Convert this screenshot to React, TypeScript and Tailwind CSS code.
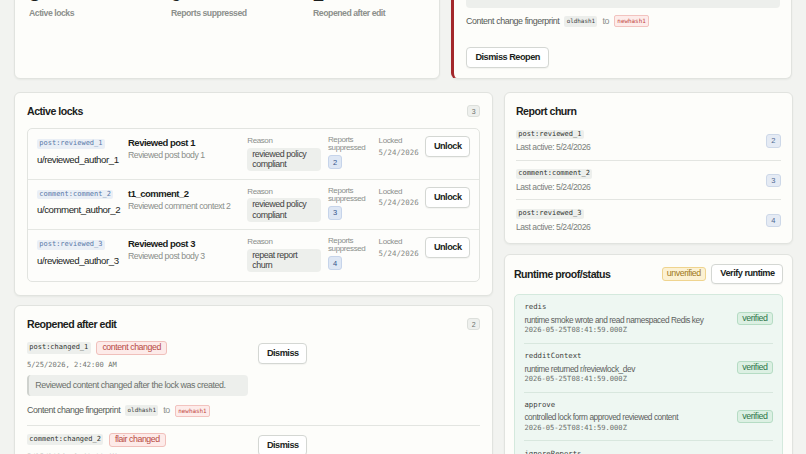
import type { ReactNode } from 'react'

const mono = "font-['DejaVu_Sans_Mono',monospace]"

const stats = [
  { value: '3', label: 'Active locks' },
  { value: '9', label: 'Reports suppressed' },
  { value: '2', label: 'Reopened after edit' },
]

const locks = [
  { id: 'post:reviewed_1', author: 'u/reviewed_author_1', title: 'Reviewed post 1', body: 'Reviewed post body 1', reason: 'reviewed policy compliant', count: 2 },
  { id: 'comment:comment_2', author: 'u/comment_author_2', title: 't1_comment_2', body: 'Reviewed comment context 2', reason: 'reviewed policy compliant', count: 3 },
  { id: 'post:reviewed_3', author: 'u/reviewed_author_3', title: 'Reviewed post 3', body: 'Reviewed post body 3', reason: 'repeat report churn', count: 4 },
]

const reopened = [
  { id: 'post:changed_1', reason: 'content changed', at: '5/25/2026, 2:42:00 AM', message: 'Reviewed content changed after the lock was created.' },
  { id: 'comment:changed_2', reason: 'flair changed', at: '5/25/2026, 2:40:00 AM', message: 'Post flair changed after the lock was created.' },
]

const checks = [
  { name: 'redis', detail: 'runtime smoke wrote and read namespaced Redis key' },
  { name: 'redditContext', detail: 'runtime returned r/reviewlock_dev' },
  { name: 'approve', detail: 'controlled lock form approved reviewed content' },
  { name: 'ignoreReports', detail: 'controlled lock form ignored reports on content' },
]

function Panel({ className = '', children }: { className?: string; children: ReactNode }) {
  return (
    <section className={`rounded-[6px] border border-[#e1e3df] bg-[#fdfdfa] shadow-[0_1px_2px_rgba(20,30,20,0.05)] ${className}`}>
      {children}
    </section>
  )
}

function Button({ className = '', children }: { className?: string; children: ReactNode }) {
  return (
    <button
      type="button"
      className={`shrink-0 whitespace-nowrap rounded-[4px] border border-[#d4d7d3] bg-white pl-[8.3px] pr-[7.8px] text-[9.2px] font-bold leading-none tracking-[-0.5px] text-[#1c1f1d] shadow-[0_1px_1px_rgba(0,0,0,0.04)] ${className}`}
    >
      {children}
    </button>
  )
}

function Count({ n }: { n: number }) {
  return (
    <span className="flex h-[12px] min-w-[12.6px] items-center justify-center rounded-[3px] border border-[#dcdfdb] bg-[#eef0ed] px-[3px] text-[7px] leading-none text-[#6d716d]">
      {n}
    </span>
  )
}

function PanelHeader({ title, right }: { title: string; right?: ReactNode }) {
  return (
    <div className="flex h-[14px] items-center justify-between">
      <h2 className="whitespace-nowrap text-[10.6px] font-bold leading-[14px] tracking-[-0.5px] text-[#1b1e1c]">{title}</h2>
      {right}
    </div>
  )
}

function Fingerprint() {
  return (
    <div className="flex h-[11px] items-center gap-[5px] whitespace-nowrap text-[8.9px] tracking-[-0.44px] text-[#575b57]">
      <span>Content change fingerprint</span>
      <code className={`${mono} rounded-[2px] bg-[#eceeeb] px-[2.4px] text-[5.9px] leading-[10.6px] tracking-normal text-[#3b3f3b]`}>oldhash1</code>
      <span className="text-[#8a8e8a]">to</span>
      <code className={`${mono} rounded-[2px] border border-[#f2c3bf] bg-[#fdecea] px-[2.4px] text-[5.9px] leading-[10px] tracking-normal text-[#c2443c]`}>newhash1</code>
    </div>
  )
}

function Label({ children }: { children: ReactNode }) {
  return <div className="text-[8px] font-medium leading-[9px] tracking-[-0.4px] text-[#8b8f8b]">{children}</div>
}

export default function App() {
  return (
    <div className="h-screen overflow-hidden bg-[#f2f3f0] px-[14px] font-['Liberation_Sans',Arial,sans-serif] text-[#1b1e1c]">
      <div className="-mt-[31px] grid h-[110px] grid-cols-[5fr_4fr] gap-[11px]">
        <Panel className="px-[14px] pt-[11px]">
          <div className="grid grid-cols-3 gap-[30px]">
            {stats.map((s) => (
              <div key={s.label}>
                <div className="text-[20px] font-bold leading-[26px] text-[#1b1e1c]">{s.value}</div>
                <div className="mt-[0.7px] whitespace-nowrap text-[8.7px] font-bold leading-[10px] tracking-[-0.47px] text-[#8c908c]">{s.label}</div>
              </div>
            ))}
          </div>
        </Panel>

        <Panel className="flex flex-col justify-end overflow-hidden border-l-[3px] border-l-[#a3282b] pb-[10.3px] pl-[12px] pr-[11px]">
          <div className="flex items-center gap-[5px]">
            <code className={`${mono} rounded-[2px] bg-[#edefec] px-[2.3px] text-[7px] leading-[11.3px] text-[#2f332f]`}>post:changed_1</code>
            <span className="rounded-[3px] border border-[#f0c0bb] bg-[#fdebe9] px-[5.5px] text-[8.8px] leading-[12.4px] tracking-[-0.44px] text-[#b84a43]">content changed</span>
          </div>
          <div className="mt-[5px] h-[44px] shrink-0 rounded-[4px] bg-[#edefec] px-[8px] pt-[4px] text-[8.9px] leading-[11px] tracking-[-0.44px] text-[#6b6f6b]">
            Reviewed content changed after the lock was created.
          </div>
          <div className="mt-[7.7px]">
            <Fingerprint />
          </div>
          <div className="mt-[20px] flex">
            <Button className="h-[21px]">Dismiss Reopen</Button>
          </div>
        </Panel>
      </div>

      <div className="mt-[13px] grid grid-cols-[1fr_289px] items-start gap-[11px]">
        <div className="flex flex-col gap-[9.7px]">
          <Panel className="px-[12px] pb-[13px] pt-[11px]">
            <PanelHeader title="Active locks" right={<Count n={3} />} />
            <div className="mt-[10px] divide-y divide-[#e5e7e3] rounded-[5px] border border-[#e2e4e0] bg-[#fdfdfb]">
              {locks.map((l) => (
                <div key={l.id} className="flex h-[50.5px] items-start pl-[9px] pr-[8.6px] pt-[7px]">
                  <div className="w-[91px] shrink-0 pt-[3px]">
                    <code className={`${mono} block w-fit rounded-[2px] bg-[#eaeff6] px-[2.3px] text-[7px] leading-[9.6px] text-[#5878a8]`}>{l.id}</code>
                    <div className="mt-[5.4px] whitespace-nowrap text-[9.7px] leading-[12px] tracking-[-0.47px] text-[#222523]">{l.author}</div>
                  </div>
                  <div className="w-[119.3px] shrink-0 pt-[1.3px]">
                    <div className="whitespace-nowrap text-[9.5px] font-bold leading-[12px] tracking-[-0.5px] text-[#1b1e1c]">{l.title}</div>
                    <div className="mt-[1px] whitespace-nowrap text-[8.7px] leading-[11px] tracking-[-0.44px] text-[#8a8e8a]">{l.body}</div>
                  </div>
                  <div className="w-[80.7px] shrink-0">
                    <Label>Reason</Label>
                    <div className="mt-[2.7px] w-[74px] rounded-[4px] bg-[#edefec] px-[5px] py-[1px] text-[8.9px] leading-[10.7px] tracking-[-0.44px] text-[#3f423f]">{l.reason}</div>
                  </div>
                  <div className="w-[50.6px] shrink-0">
                    <div className="text-[8px] font-medium leading-[8.3px] tracking-[-0.4px] text-[#8b8f8b]">Reports suppressed</div>
                    <span className="mt-[2.7px] flex h-[14px] w-[14px] items-center justify-center rounded-[3px] border border-[#c6d4ea] bg-[#dee7f4] text-[7.5px] text-[#34548a]">{l.count}</span>
                  </div>
                  <div className="w-[46px] shrink-0">
                    <Label>Locked</Label>
                    <div className={`${mono} mt-[2.7px] text-[7.4px] leading-[10px] text-[#858985]`}>5/24/2026</div>
                  </div>
                  <Button className="h-[21.3px]">Unlock</Button>
                </div>
              ))}
            </div>
          </Panel>

          <Panel className="px-[12px] pt-[11px]">
            <PanelHeader title="Reopened after edit" right={<Count n={2} />} />
            <div className="mt-[9.6px]">
              {reopened.map((r) => (
                <div key={r.id} className="flex items-start gap-[9.6px] border-b border-[#e3e5e1] pb-[8.4px] pt-[7px] first:pt-0">
                  <div className="w-[221px] shrink-0">
                    <div className="flex h-[14.4px] items-center gap-[5.3px]">
                      <code className={`${mono} rounded-[2px] bg-[#edefec] px-[2.3px] text-[7px] leading-[11.3px] text-[#2f332f]`}>{r.id}</code>
                      <span className="flex h-[14.4px] items-center rounded-[3px] border border-[#f0c0bb] bg-[#fdebe9] px-[5.5px] text-[8.8px] tracking-[-0.44px] text-[#b84a43]">{r.reason}</span>
                    </div>
                    <div className={`${mono} mt-[4.6px] text-[7.1px] leading-[10px] text-[#737773]`}>{r.at}</div>
                    <div className="mt-[5.4px] flex h-[20.6px] items-center rounded-[4px] border-l-2 border-[#cfd2ce] bg-[#edefec] pl-[6.3px] text-[8.9px] tracking-[-0.44px] text-[#6b6f6b]">{r.message}</div>
                    <div className="mt-[9.4px]">
                      <Fingerprint />
                    </div>
                  </div>
                  <Button className="mt-[2px] h-[21.4px]">Dismiss</Button>
                </div>
              ))}
            </div>
          </Panel>
        </div>

        <div className="flex flex-col gap-[10px]">
          <Panel className="px-[11px] pb-[11px] pt-[11px]">
            <PanelHeader title="Report churn" />
            <ul className="mt-[11.7px]">
              {locks.map((l) => (
                <li key={l.id} className="flex items-center justify-between border-b border-[#e3e5e1] pb-[7.5px] pt-[8.6px] first:pt-0 last:border-b-0 last:pb-0">
                  <div>
                    <code className={`${mono} block w-fit rounded-[2px] bg-[#edefec] px-[2.3px] text-[7px] leading-[9.6px] text-[#2f332f]`}>{l.id}</code>
                    <div className="mt-[3px] text-[8.6px] leading-[10px] tracking-[-0.44px] text-[#7b7f7b]">Last active: 5/24/2026</div>
                  </div>
                  <span className="flex h-[13.6px] w-[15px] items-center justify-center rounded-[3px] border border-[#cdd8e8] bg-[#e5ebf4] text-[7.5px] text-[#4f6890]">{l.count}</span>
                </li>
              ))}
            </ul>
          </Panel>

          <Panel className="pl-[9px] pr-[8.5px] pt-[9px]">
            <div className="flex h-[20.3px] items-center justify-between">
              <h2 className="whitespace-nowrap text-[10.6px] font-bold leading-[14px] tracking-[-0.5px] text-[#1b1e1c]">Runtime proof/status</h2>
              <div className="flex items-center gap-[5px]">
                <span className="flex h-[14px] items-center rounded-[3px] border border-[#efd48f] bg-[#fcf1d3] px-[4.2px] text-[8.9px] tracking-[-0.44px] text-[#a07820]">unverified</span>
                <Button className="h-[20.3px]">Verify runtime</Button>
              </div>
            </div>
            <div className="mt-[10px] rounded-[5px] border border-[#d4e9dd] bg-[#eef7f2] px-[9.5px]">
              {checks.map((c) => (
                <div key={c.name} className="flex items-center justify-between border-b border-[#d8e7de] pb-[7px] pt-[6.5px] last:border-b-0">
                  <div>
                    <div className={`${mono} text-[7.3px] leading-[11px] text-[#3d413d]`}>{c.name}</div>
                    <div className="mt-[2.3px] text-[8.3px] leading-[10.5px] tracking-[-0.44px] text-[#5d615d]">{c.detail}</div>
                    <div className={`${mono} text-[7.1px] leading-[10.5px] text-[#6c706c]`}>2026-05-25T08:41:59.000Z</div>
                  </div>
                  <span className="flex h-[13.4px] items-center rounded-[3px] border border-[#b5dcc4] bg-[#dcf0e3] px-[4.5px] text-[8.9px] font-medium tracking-[-0.44px] text-[#2d7548]">verified</span>
                </div>
              ))}
            </div>
          </Panel>
        </div>
      </div>
    </div>
  )
}
